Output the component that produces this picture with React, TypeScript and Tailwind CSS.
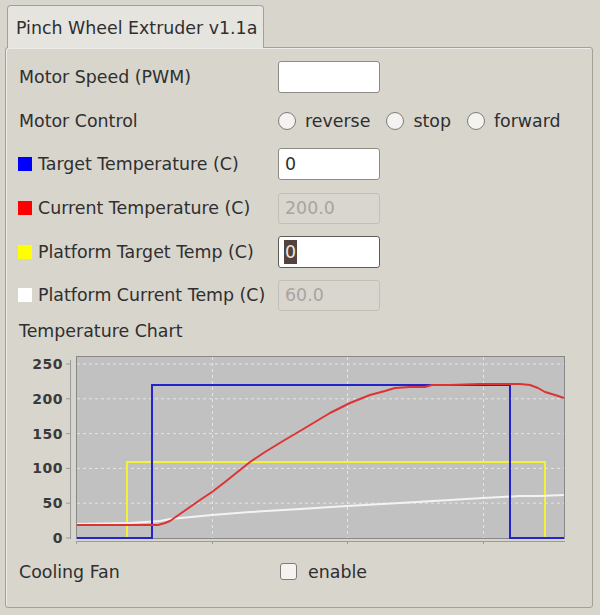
import React from 'react';

const red = [
  [77, 525], [158, 525], [165, 523], [170, 521], [180, 514], [190, 507], [200, 500], [212, 492],
  [225, 482], [240, 470], [250, 462], [265, 452], [283, 441], [300, 431], [315, 422], [330, 413],
  [350, 403], [370, 395], [385, 391], [395, 388], [410, 387], [425, 387], [432, 385], [450, 385],
  [480, 384], [500, 384], [520, 384], [530, 385], [538, 388], [545, 392], [555, 395], [564, 398],
];

const white = [
  [77, 524], [130, 523], [160, 521], [170, 519], [212, 515], [250, 512], [300, 509], [347, 506],
  [400, 503], [450, 500], [483, 498], [520, 496], [540, 496], [564, 495],
];

const toPoints = (pts: number[][]) => pts.map(([x, y]) => `${x},${y}`).join(' ');

const yTicks = [250, 200, 150, 100, 50, 0];
const yOf = (v: number) => 538 - v * 0.696;

function Row({ label, swatch, children }: { label: string; swatch?: string; children?: React.ReactNode }) {
  return (
    <div className="grid grid-cols-[259px_1fr] items-center h-[43.6px] pl-[13px]">
      <div className="flex items-center">
        {swatch && <span className={`w-[14px] h-[14px] mr-[6px] -ml-px ${swatch}`} />}
        <span>{label}</span>
      </div>
      <div className="flex items-center">{children}</div>
    </div>
  );
}

function Field({ value, disabled, selected }: { value?: string; disabled?: boolean; selected?: boolean }) {
  if (disabled) {
    return (
      <div className="w-[102px] h-[31px] rounded-[3px] border border-[#c2bfb7] bg-[#d9d6cf] flex items-center pl-[6px] text-[#a8a59e]">
        {value}
      </div>
    );
  }
  return (
    <div
      className={`w-[102px] h-[32px] rounded-[3px] border bg-white flex items-center pl-[5px] ${
        selected ? 'border-[#5f5c57]' : 'border-[#8e8b85]'
      }`}
    >
      {selected ? <span className="bg-[#52433d] text-[#eee6df] px-px leading-[24px]">{value}</span> : <span className="pl-px">{value}</span>}
    </div>
  );
}

function Radio({ label }: { label: string }) {
  return (
    <div className="flex items-center">
      <span className="w-[18px] h-[18px] rounded-full border border-[#7f7c76] bg-[#f4f3f1]" />
      <span className="ml-[9px]">{label}</span>
    </div>
  );
}

function Chart() {
  return (
    <svg width={586} height={200} viewBox="6 346 586 200" className="block">
      <rect x={76.5} y={356.5} width={488} height={182} fill="#c1c1c1" stroke="#888" />
      {yTicks.slice(0, 5).map((v) => (
        <line key={v} x1={77} x2={564} y1={yOf(v)} y2={yOf(v)} stroke="#e4e4e4" strokeDasharray="3 3" />
      ))}
      {[212, 347, 483].map((x) => (
        <line key={x} x1={x + 0.5} x2={x + 0.5} y1={357} y2={538} stroke="#e4e4e4" strokeDasharray="3 3" />
      ))}
      {/* axes */}
      <line x1={70.5} x2={70.5} y1={360} y2={539} stroke="#9b9b9b" />
      {yTicks.map((v) => (
        <g key={v}>
          <line x1={66} x2={70} y1={yOf(v)} y2={yOf(v)} stroke="#9b9b9b" />
          <text
            x={63}
            y={yOf(v) + 5}
            textAnchor="end"
            fontFamily="DejaVu Sans, sans-serif"
            fontWeight="bold"
            fontSize={14}
            letterSpacing={0.5}
            fill="#3a3a3a"
          >
            {v}
          </text>
        </g>
      ))}
      <line x1={76} x2={565} y1={541.5} y2={541.5} stroke="#9b9b9b" />
      {[76, 212, 347, 483].map((x) => (
        <line key={x} x1={x + 0.5} x2={x + 0.5} y1={541} y2={544} stroke="#9b9b9b" />
      ))}
      {/* series */}
      <polyline points="127,538 127,462 545,462 545,538" fill="none" stroke="#f2f23a" strokeWidth={2} />
      <polyline points={toPoints(white)} fill="none" stroke="#f3f3f3" strokeWidth={2} />
      <polyline points="77,538 152,538 152,385 510,385 510,538 564,538" fill="none" stroke="#2424cc" strokeWidth={2} />
      <polyline points={toPoints(red)} fill="none" stroke="#dd3333" strokeWidth={2} strokeLinejoin="round" />
    </svg>
  );
}

export default function App() {
  return (
    <div className="w-[600px] h-[615px] bg-[#d8d5cd] pt-[5px] font-['DejaVu_Sans',sans-serif] text-[17.4px] text-[#2f2f2f] overflow-hidden">
      <div className="pl-[7px] flex">
        <div className="relative z-10 w-[257px] h-[43px] -mb-px rounded-t-[4px] border border-b-0 border-[#a3a098] bg-[#e6e4df] flex items-center pl-[8px] pt-[3px]">
          Pinch Wheel Extruder v1.1a
        </div>
      </div>
      <div className="ml-[5px] w-[588px] h-[561px] rounded-[3px] border border-[#a3a098] bg-[#d8d5cd] shadow-[inset_1px_1px_0_#ecebe7] pt-[7.5px]">
        <Row label="Motor Speed (PWM)">
          <Field />
        </Row>
        <Row label="Motor Control">
          <div className="flex items-center gap-[16px]">
            <Radio label="reverse" />
            <Radio label="stop" />
            <Radio label="forward" />
          </div>
        </Row>
        <Row label="Target Temperature (C)" swatch="bg-[#0000ff]">
          <Field value="0" />
        </Row>
        <Row label="Current Temperature (C)" swatch="bg-[#ff0000]">
          <Field value="200.0" disabled />
        </Row>
        <Row label="Platform Target Temp (C)" swatch="bg-[#ffff00]">
          <Field value="0" selected />
        </Row>
        <Row label="Platform Current Temp (C)" swatch="bg-white">
          <Field value="60.0" disabled />
        </Row>
        <div className="h-[28.5px] flex items-center pl-[13px]">Temperature Chart</div>
        <Chart />
        <div className="grid grid-cols-[261px_1fr] items-center h-[52px] pl-[13px]">
          <span>Cooling Fan</span>
          <div className="flex items-center">
            <span className="w-[17px] h-[17px] rounded-[3px] border border-[#7f7c76] bg-[#f4f3f1]" />
            <span className="ml-[11px]">enable</span>
          </div>
        </div>
      </div>
    </div>
  );
}
